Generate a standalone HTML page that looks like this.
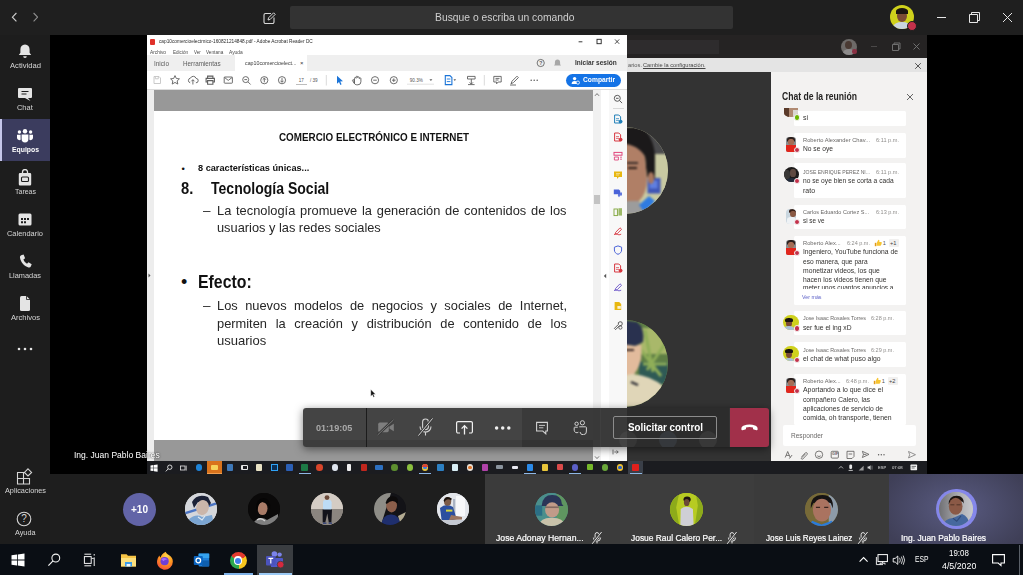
<!DOCTYPE html>
<html lang="es"><head><meta charset="utf-8"><title>Microsoft Teams</title>
<style>
html,body{margin:0;padding:0;background:#000;}
body{width:1023px;height:575px;overflow:hidden;position:relative;font-family:"Liberation Sans",sans-serif;}
#r{position:absolute;left:0;top:0;width:1023px;height:575px;overflow:hidden;background:#000;}
#r div,#r span,#r svg{position:absolute;}
#r span{white-space:nowrap;transform-origin:0 50%;left:0;}
</style></head>
<body><div id="r">
<div style="left:0px;top:0px;width:1023px;height:35px;background:#1f1f1f;"></div>
<svg style="left:8px;top:10px;" width="30" height="14" viewBox="0 0 30 14"><path d="M8.4 3 L4.4 7.2 L8.4 11.4" fill="none" stroke="#cfcfcf" stroke-width="1.1"/><path d="M25.6 3 L29.6 7.2 L25.6 11.4" fill="none" stroke="#8f8f8f" stroke-width="1.1"/></svg>
<svg style="left:262px;top:11px;" width="14" height="14" viewBox="0 0 14 14"><path d="M9 2.5 H3.5 a1.5 1.5 0 0 0 -1.5 1.5 v7 a1.5 1.5 0 0 0 1.5 1.5 h7 a1.5 1.5 0 0 0 1.5 -1.5 V6.5" fill="none" stroke="#d8d8d8" stroke-width="1.1"/><path d="M6 9 L6.6 6.8 L11.6 1.8 L13.2 3.4 L8.2 8.4 Z" fill="none" stroke="#d8d8d8" stroke-width="1"/></svg>
<div style="left:290px;top:5.5px;width:443px;height:23px;background:#333333;border-radius:2px;"></div>
<span id="t1" style="top:10.7px;font-size:10.5px;line-height:12.6px;color:#cfcfcf;font-weight:400;left:435.30px;transform:scaleX(0.9835);">Busque o escriba un comando</span>
<div style="left:890px;top:5px;width:24px;height:24px;border-radius:50%;background:#cfd11c;overflow:hidden;"><div style="left:7px;top:5px;width:10px;height:12px;border-radius:50%;background:#7a4a35;"></div><div style="left:6px;top:3px;width:12px;height:6px;border-radius:50% 50% 0 0;background:#1b1512;"></div><div style="left:3px;top:17px;width:18px;height:10px;border-radius:50% 50% 0 0;background:#c9d4e0;"></div></div>
<div style="left:907px;top:21px;width:8px;height:8px;background:#c4314b;border-radius:50%;border:1px solid #1f1f1f;"></div>
<svg style="left:935px;top:10px;" width="80" height="14" viewBox="0 0 80 14"><path d="M2 7.5 H11" stroke="#e6e6e6" stroke-width="1" fill="none"/><path d="M34.5 4.5 H42.5 V12.5 H34.5 Z M36.5 4.5 V2.5 H44.5 V10.5 H42.5" stroke="#e6e6e6" stroke-width="1" fill="none"/><path d="M68 3 L77 12 M77 3 L68 12" stroke="#e6e6e6" stroke-width="1" fill="none"/></svg>
<div style="left:0px;top:35px;width:50px;height:510px;background:#1d1d1d;"></div>
<div style="left:0px;top:119px;width:50px;height:42px;background:#3b3c5e;"></div>
<div style="left:0px;top:119px;width:2px;height:42px;background:#c5c6ea;"></div>
<svg style="left:17px;top:43px;" width="16" height="17" viewBox="0 0 16 17"><path d="M8 1.5 c-3 0 -4.6 2.2 -4.6 5 v3.2 l-1.6 2.3 h12.4 l-1.6 -2.3 v-3.2 c0 -2.8 -1.6 -5 -4.6 -5z" fill="#e4e4e4"/><path d="M6.2 13.3 h3.6 a1.8 1.8 0 0 1 -3.6 0z" fill="#e4e4e4"/></svg>
<span id="t2" style="top:61.0px;font-size:7.5px;line-height:9.0px;color:#d6d6d6;font-weight:400;left:9.50px;transform:scaleX(1.0185);">Actividad</span>
<svg style="left:17px;top:86px;" width="16" height="16" viewBox="0 0 16 16"><path d="M2 2 h12 a1 1 0 0 1 1 1 v8 a1 1 0 0 1 -1 1 h-3 l2.5 3 l-5.5 -3 h-6 a1 1 0 0 1 -1 -1 v-8 a1 1 0 0 1 1 -1z" fill="#e4e4e4"/><path d="M4.5 5.5 h7 M4.5 8 h5" stroke="#1d1d1d" stroke-width="1"/></svg>
<span id="t3" style="top:102.5px;font-size:7.5px;line-height:9.0px;color:#d6d6d6;font-weight:400;left:17.15px;transform:scaleX(0.9909);">Chat</span>
<svg style="left:16px;top:128px;" width="18" height="16" viewBox="0 0 18 16"><circle cx="9" cy="3.2" r="2.2" fill="#fff"/><circle cx="3.4" cy="4" r="1.7" fill="#fff"/><circle cx="14.6" cy="4" r="1.7" fill="#fff"/><path d="M5.6 6.5 h6.8 v4.5 a3.4 3.4 0 0 1 -6.8 0z" fill="#fff"/><path d="M1 6.8 h3.6 v5 a2.4 2.4 0 0 1 -3.6 -2z" fill="#fff"/><path d="M17 6.8 h-3.6 v5 a2.4 2.4 0 0 0 3.6 -2z" fill="#fff"/></svg>
<span id="t4" style="top:144.8px;font-size:7.5px;line-height:9.0px;color:#fff;font-weight:700;left:11.50px;transform:scaleX(0.9124);">Equipos</span>
<svg style="left:17px;top:169px;" width="16" height="18" viewBox="0 0 16 18"><path d="M5.5 4 v-1 a2.5 2.5 0 0 1 5 0 v1" fill="none" stroke="#e4e4e4" stroke-width="1.3"/><path d="M3 4 h10 a1.2 1.2 0 0 1 1.2 1.2 v10 a1.2 1.2 0 0 1 -1.2 1.2 h-10 a1.2 1.2 0 0 1 -1.2 -1.2 v-10 a1.2 1.2 0 0 1 1.2 -1.2z" fill="#e4e4e4"/><rect x="4.5" y="8" width="7" height="4.5" rx="1" fill="none" stroke="#1d1d1d" stroke-width="1.1"/></svg>
<span id="t5" style="top:186.5px;font-size:7.5px;line-height:9.0px;color:#d6d6d6;font-weight:400;left:14.50px;transform:scaleX(0.9327);">Tareas</span>
<svg style="left:17px;top:212px;" width="16" height="15" viewBox="0 0 16 15"><rect x="1.5" y="1.5" width="13" height="12" rx="1.5" fill="#e4e4e4"/><path d="M4 6 h2 v2 h-2z M7 6 h2 v2 h-2z M10 6 h2 v2 h-2z M4 9.2 h2 v2 h-2z M7 9.2 h2 v2 h-2z" fill="#1d1d1d"/></svg>
<span id="t6" style="top:228.5px;font-size:7.5px;line-height:9.0px;color:#d6d6d6;font-weight:400;left:7.00px;transform:scaleX(0.9922);">Calendario</span>
<svg style="left:18px;top:254px;" width="14" height="15" viewBox="0 0 14 15"><path d="M3.2 1.2 l2.4 -0.6 l1.5 3.6 l-1.7 1.3 c0.7 1.8 1.9 3.2 3.6 4.2 l1.5 -1.5 l3.2 2 l-0.9 2.4 c-0.4 0.9 -1.3 1.2 -2.3 0.9 c-4.6 -1.6 -7.6 -5 -8.5 -9.8 c-0.2 -1.1 0.2 -2.1 1.2 -2.5z" fill="#e4e4e4"/></svg>
<span id="t7" style="top:270.5px;font-size:7.5px;line-height:9.0px;color:#d6d6d6;font-weight:400;left:9.00px;transform:scaleX(0.9837);">Llamadas</span>
<svg style="left:18px;top:295px;" width="14" height="17" viewBox="0 0 14 17"><path d="M2 2.5 a1.5 1.5 0 0 1 1.5 -1.5 h5 l3.5 3.5 v10 a1.5 1.5 0 0 1 -1.5 1.5 h-7 a1.5 1.5 0 0 1 -1.5 -1.5z" fill="#e4e4e4"/><path d="M8.5 1 v3.5 h3.5" fill="none" stroke="#1d1d1d" stroke-width="0.8"/></svg>
<span id="t8" style="top:312.5px;font-size:7.5px;line-height:9.0px;color:#d6d6d6;font-weight:400;left:10.50px;transform:scaleX(1.0081);">Archivos</span>
<svg style="left:16px;top:346px;" width="18" height="6" viewBox="0 0 18 6"><circle cx="3" cy="3" r="1.3" fill="#e4e4e4"/><circle cx="9" cy="3" r="1.3" fill="#e4e4e4"/><circle cx="15" cy="3" r="1.3" fill="#e4e4e4"/></svg>
<svg style="left:16px;top:468px;" width="17" height="17" viewBox="0 0 17 17"><path d="M1.5 4.5 h6 v6 h-6z M1.5 10.5 h6 v5.5 h-6z M7.5 10.5 h6 v5.5 h-6z" fill="none" stroke="#d6d6d6" stroke-width="1.1"/><path d="M12 0.8 l3.6 3.6 l-3.6 3.6 l-3.6 -3.6z" fill="none" stroke="#d6d6d6" stroke-width="1.1"/></svg>
<span id="t9" style="top:486.1px;font-size:7.5px;line-height:9.0px;color:#d6d6d6;font-weight:400;left:4.50px;transform:scaleX(0.9737);">Aplicaciones</span>
<svg style="left:16px;top:511px;" width="16" height="16" viewBox="0 0 16 16"><circle cx="8" cy="8" r="6.8" fill="none" stroke="#d6d6d6" stroke-width="1.1"/></svg>
<span id="t10" style="top:513.2px;font-size:10px;line-height:12.0px;color:#d6d6d6;font-weight:400;left:21.22px;">?</span>
<span id="t11" style="top:528.2px;font-size:7.5px;line-height:9.0px;color:#d6d6d6;font-weight:400;left:14.75px;transform:scaleX(0.9697);">Ayuda</span>
<div style="left:627px;top:35px;width:300px;height:23px;background:#252323;"></div>
<div style="left:627px;top:40px;width:92px;height:13.5px;background:#2e2c2d;"></div>
<div style="left:840.5px;top:38.5px;width:16px;height:16px;border-radius:50%;background:#6d6a68;overflow:hidden;"><div style="left:4.5px;top:2.5px;width:7px;height:8px;border-radius:50%;background:#4a3a33;"></div><div style="left:2px;top:10.5px;width:12px;height:8px;border-radius:50% 50% 0 0;background:#8d8b8b;"></div></div>
<div style="left:852px;top:49px;width:4.5px;height:4.5px;background:#8a3043;border-radius:50%;"></div>
<svg style="left:868px;top:41px;" width="56" height="11" viewBox="0 0 56 11"><path d="M3 5.5 H9" stroke="#4a4848" stroke-width="1"/><path d="M24.5 3.5 H30.5 V9.5 H24.5 Z M26 3.5 V2 H32 V8 H30.5" stroke="#777" stroke-width="0.9" fill="none"/><path d="M45.5 2.5 L51.5 8.5 M51.5 2.5 L45.5 8.5" stroke="#777" stroke-width="0.9"/></svg>
<div style="left:627px;top:58px;width:300px;height:14px;background:#e4e4e4;"></div>
<span id="t12" style="top:62.24px;font-size:5.6px;line-height:6.72px;color:#555;font-weight:400;left:628.00px;transform:scaleX(1.0228);">arios.</span>
<span id="t13" style="top:62.24px;font-size:5.6px;line-height:6.72px;color:#444;font-weight:400;text-decoration:underline;left:642.50px;transform:scaleX(1.0150);">Cambie la configuración.</span>
<svg style="left:914px;top:61.5px;" width="8" height="8" viewBox="0 0 8 8"><path d="M1.2 1.2 L6.8 6.8 M6.8 1.2 L1.2 6.8" stroke="#444" stroke-width="0.9"/></svg>
<div style="left:627px;top:72px;width:144px;height:389px;background:#333333;"></div>
<div style="left:580.5px;top:126.5px;width:87px;height:87px;border-radius:50%;overflow:hidden;background:#c8c9a2;"><svg style="left:0;top:0;filter:blur(0.9px);" width="87" height="87" viewBox="0 0 87 87"><rect width="87" height="27" fill="#4a4a4c"/><rect y="27" width="87" height="60" fill="#c9caa2"/><rect x="66.5" y="51" width="13" height="15.5" fill="#3f55b5"/><rect x="68.5" y="53.5" width="8" height="8" fill="#5f7fe0"/><path d="M40 0 L60 0 Q72 8 74 28 L74 52 L66 50 L64 30 Q58 18 40 16z" fill="#1b191a"/><path d="M40 16 Q58 18 64 30 L66 52 Q66 66 58 74 L40 78z" fill="#b07f66"/><ellipse cx="70" cy="51" rx="3.2" ry="6" fill="#a9775f"/><path d="M47 41 h9" stroke="#2a1d18" stroke-width="2"/><path d="M46 36 h11" stroke="#1b191a" stroke-width="1.6"/><path d="M40 74 L58 74 L66 87 L40 87z" fill="#9c9c9c"/><path d="M58 78 L68 69 L74 74 L64 86z" fill="#2f7be0"/></svg></div>
<div style="left:580.5px;top:320px;width:87px;height:87px;border-radius:50%;overflow:hidden;background:#6d8a4c;"><svg style="left:0;top:0;filter:blur(0.9px);" width="87" height="87" viewBox="0 0 87 87"><rect width="87" height="87" fill="#5f7f45"/><rect x="60" y="8" width="27" height="26" fill="#a9b86a"/><rect x="58" y="42" width="29" height="22" fill="#2f5a55"/><path d="M64 10 L72 52 M84 24 L66 50 M60 30 L80 56 M86 44 L62 44" stroke="#8fae58" stroke-width="3"/><path d="M40 0 L56 2 Q64 8 62 22 L54 26 L40 24z" fill="#29314f"/><path d="M40 24 L54 26 L60 24 Q62 40 56 50 L52 56 L40 56z" fill="#e2bb9c"/><path d="M44 30 h9" stroke="#3a2a28" stroke-width="2"/><path d="M40 56 L52 54 Q70 56 82 66 L84 87 L40 87z" fill="#e0d6b8"/><path d="M50 62 l7 3" stroke="#2b2b33" stroke-width="2.4"/></svg></div>
<div style="left:771px;top:72px;width:156px;height:389px;background:#f3f2f1;"></div>
<span id="t14" style="top:90.5px;font-size:10px;line-height:12.0px;color:#252423;font-weight:700;left:782.00px;transform:scaleX(0.8598);">Chat de la reunión</span>
<svg style="left:906px;top:92.5px;" width="8" height="8" viewBox="0 0 8 8"><path d="M1 1 L7 7 M7 1 L1 7" stroke="#555" stroke-width="0.9"/></svg>
<div style="left:794px;top:111px;width:112px;height:14.8px;background:#ffffff;border-radius:1.5px;"></div>
<div style="left:784px;top:108.0px;width:14px;height:9px;border-radius:0 0 45% 45%;overflow:hidden;background:#b08a72;"><div style="left:0;top:0;width:5px;height:9px;background:#5a3a2a;"></div><div style="left:9px;top:1.6px;width:5px;height:8px;background:#d9d6d2;"></div></div>
<div style="left:793.7px;top:114.10000000000001px;width:4.6px;height:4.6px;border-radius:50%;background:#6bb700;border:0.7px solid #f3f2f1;"></div>
<span id="t15" style="top:113.8px;font-size:7px;line-height:8.4px;color:#33312f;font-weight:400;left:802.70px;transform:scaleX(0.9877);">si</span>
<div style="left:794px;top:132.5px;width:112px;height:25.0px;background:#ffffff;border-radius:1.5px;"></div>
<div style="left:786.2px;top:136.5px;width:9.6px;height:15.2px;border-radius:3px 3px 2px 2px;overflow:hidden;background:#8b8f92;"><div style="left:1.2px;top:0;width:7.2px;height:5px;border-radius:50% 50% 30% 30%;background:#2a1f1d;"></div><div style="left:2.2px;top:2.6px;width:5.2px;height:6px;border-radius:45%;background:#a56d55;"></div><div style="left:0;top:8.4px;width:9.6px;height:7px;background:#e2261c;"></div></div>
<div style="left:793.7px;top:146.79999999999998px;width:4.6px;height:4.6px;border-radius:50%;background:#c4314b;border:0.7px solid #f3f2f1;"></div>
<span id="t16" style="top:136.88px;font-size:5.7px;line-height:6.84px;color:#6a6867;font-weight:400;left:802.70px;transform:scaleX(1.0106);">Roberto Alexander Chav...</span>
<span id="t17" style="top:136.88px;font-size:5.7px;line-height:6.84px;color:#8f8d8b;font-weight:400;left:875.50px;transform:scaleX(0.9873);">6:11 p.m.</span>
<span id="t18" style="top:145.2px;font-size:7px;line-height:8.4px;color:#33312f;font-weight:400;left:802.70px;transform:scaleX(0.9514);">No se oye</span>
<div style="left:794px;top:163.3px;width:112px;height:34.3px;background:#ffffff;border-radius:1.5px;"></div>
<div style="left:783.5px;top:167.4px;width:15px;height:15px;border-radius:50%;overflow:hidden;background:#1d1b1b;"><div style="left:6px;top:2px;width:6px;height:7.5px;border-radius:45%;background:#5f4a42;"></div><div style="left:0;top:3px;width:6px;height:9px;background:#3a3837;border-radius:40%;"></div><div style="left:2px;top:10.5px;width:11px;height:6px;border-radius:50% 50% 0 0;background:#232c3c;"></div></div>
<div style="left:793.7px;top:177.6px;width:4.6px;height:4.6px;border-radius:50%;background:#c4314b;border:0.7px solid #f3f2f1;"></div>
<span id="t19" style="top:168.98px;font-size:5.7px;line-height:6.84px;color:#6a6867;font-weight:400;left:802.70px;transform:scaleX(0.8945);">JOSE ENRIQUE PEREZ NI...</span>
<span id="t20" style="top:168.98px;font-size:5.7px;line-height:6.84px;color:#8f8d8b;font-weight:400;left:875.50px;transform:scaleX(0.9873);">6:11 p.m.</span>
<span id="t21" style="top:177.3px;font-size:7px;line-height:8.4px;color:#33312f;font-weight:400;left:802.70px;transform:scaleX(0.9502);">no se oye bien se corta a cada</span>
<span id="t22" style="top:186.5px;font-size:7px;line-height:8.4px;color:#33312f;font-weight:400;left:802.70px;transform:scaleX(0.9948);">rato</span>
<div style="left:794px;top:204.5px;width:112px;height:24.1px;background:#ffffff;border-radius:1.5px;"></div>
<div style="left:786px;top:208.5px;width:10.4px;height:15.2px;border-radius:4px;overflow:hidden;background:#c9d6df;"><div style="left:3.4px;top:0.4px;width:7px;height:4.4px;background:#3a221a;border-radius:50% 50% 20% 20%;"></div><div style="left:4px;top:2.4px;width:5.6px;height:6.4px;border-radius:45%;background:#8a5a44;"></div><div style="left:0.8px;top:8.4px;width:9.6px;height:7px;background:#eef2f5;border-radius:40% 40% 0 0;"></div></div>
<div style="left:793.7px;top:218.79999999999998px;width:4.6px;height:4.6px;border-radius:50%;background:#c4314b;border:0.7px solid #f3f2f1;"></div>
<span id="t23" style="top:208.88px;font-size:5.7px;line-height:6.84px;color:#6a6867;font-weight:400;left:802.70px;transform:scaleX(0.9710);">Carlos Eduardo Cortez S...</span>
<span id="t24" style="top:208.88px;font-size:5.7px;line-height:6.84px;color:#8f8d8b;font-weight:400;left:875.50px;transform:scaleX(0.9697);">6:13 p.m.</span>
<span id="t25" style="top:217.2px;font-size:7px;line-height:8.4px;color:#33312f;font-weight:400;left:802.70px;transform:scaleX(0.9059);">si se ve</span>
<div style="left:794px;top:235.6px;width:112px;height:69.2px;background:#ffffff;border-radius:1.5px;"></div>
<div style="left:786.2px;top:239.6px;width:9.6px;height:15.2px;border-radius:3px 3px 2px 2px;overflow:hidden;background:#8b8f92;"><div style="left:1.2px;top:0;width:7.2px;height:5px;border-radius:50% 50% 30% 30%;background:#2a1f1d;"></div><div style="left:2.2px;top:2.6px;width:5.2px;height:6px;border-radius:45%;background:#a56d55;"></div><div style="left:0;top:8.4px;width:9.6px;height:7px;background:#e2261c;"></div></div>
<div style="left:793.7px;top:249.89999999999998px;width:4.6px;height:4.6px;border-radius:50%;background:#c4314b;border:0.7px solid #f3f2f1;"></div>
<span id="t26" style="top:239.98px;font-size:5.7px;line-height:6.84px;color:#6a6867;font-weight:400;left:802.70px;transform:scaleX(1.0077);">Roberto Alex...</span>
<span id="t27" style="top:239.98px;font-size:5.7px;line-height:6.84px;color:#8f8d8b;font-weight:400;left:847.00px;transform:scaleX(0.9697);">6:24 p.m.</span>
<svg style="left:873.5px;top:239.20000000000002px;" width="8" height="8" viewBox="0 0 8 8"><path d="M0.8 3.8 h1.6 v3.4 h-1.6z" fill="#e09a1a"/><path d="M2.8 3.8 l1.6 -3 c1 0 1.2 0.8 0.9 2.2 h1.7 c0.7 0 0.9 0.6 0.6 1 c0.3 0.4 0.2 0.8 -0.2 1 c0.2 0.4 0 0.8 -0.4 0.9 c0.1 0.5 -0.2 0.8 -0.8 0.8 h-3.4z" fill="#f7c531"/></svg>
<span id="t28" style="top:239.98px;font-size:5.7px;line-height:6.84px;color:#555;font-weight:400;left:882.80px;">1</span>
<div style="left:889.0px;top:239.4px;width:10px;height:8px;background:#f1f0ef;border-radius:1px;"></div>
<span id="t29" style="top:239.98px;font-size:5.7px;line-height:6.84px;color:#444;font-weight:400;left:890.00px;">+1</span>
<span id="t30" style="top:248.3px;font-size:7px;line-height:8.4px;color:#33312f;font-weight:400;left:802.70px;transform:scaleX(0.9634);">Ingeniero, YouTube funciona de</span>
<span id="t31" style="top:257.5px;font-size:7px;line-height:8.4px;color:#33312f;font-weight:400;left:802.70px;transform:scaleX(0.9431);">eso manera, que para</span>
<span id="t32" style="top:266.7px;font-size:7px;line-height:8.4px;color:#33312f;font-weight:400;left:802.70px;transform:scaleX(0.9661);">monetizar videos, los que</span>
<span id="t33" style="top:275.9px;font-size:7px;line-height:8.4px;color:#33312f;font-weight:400;left:802.70px;transform:scaleX(0.9620);">hacen los videos tienen que</span>
<div style="left:802px;top:284.5px;width:100px;height:4.4px;overflow:hidden;"><span id="clip1" style="left:0.7px;top:-0.2px;font-size:7px;line-height:8.4px;color:#2b2a29;transform:scaleX(0.93);">meter unos cuantos anuncios a</span></div>
<span id="t34" style="top:293.98px;font-size:5.7px;line-height:6.84px;color:#5b5fc7;font-weight:400;left:802.30px;transform:scaleX(0.9341);">Ver más</span>
<div style="left:794px;top:310.8px;width:112px;height:24.2px;background:#ffffff;border-radius:1.5px;"></div>
<div style="left:783.4px;top:314.8px;width:15.2px;height:15.2px;border-radius:50%;overflow:hidden;background:#cfd11c;"><div style="left:2.4px;top:4.4px;width:6.4px;height:7.6px;border-radius:45%;background:#7a4a36;"></div><div style="left:1.8px;top:3.2px;width:7.4px;height:4px;border-radius:50% 50% 20% 20%;background:#191311;"></div><div style="left:0.6px;top:11.6px;width:10px;height:5px;border-radius:50% 50% 0 0;background:#a9c0d8;"></div></div>
<div style="left:793.7px;top:325.1px;width:4.6px;height:4.6px;border-radius:50%;background:#c4314b;border:0.7px solid #f3f2f1;"></div>
<span id="t35" style="top:315.18px;font-size:5.7px;line-height:6.84px;color:#6a6867;font-weight:400;left:802.70px;transform:scaleX(0.9460);">Jose Isaac Rosales Torres</span>
<span id="t36" style="top:315.18px;font-size:5.7px;line-height:6.84px;color:#8f8d8b;font-weight:400;left:871.00px;transform:scaleX(0.9697);">6:28 p.m.</span>
<span id="t37" style="top:323.5px;font-size:7px;line-height:8.4px;color:#33312f;font-weight:400;left:802.70px;transform:scaleX(0.9586);">ser fue el ing xD</span>
<div style="left:794px;top:342.2px;width:112px;height:24.4px;background:#ffffff;border-radius:1.5px;"></div>
<div style="left:783.4px;top:346.2px;width:15.2px;height:15.2px;border-radius:50%;overflow:hidden;background:#cfd11c;"><div style="left:2.4px;top:4.4px;width:6.4px;height:7.6px;border-radius:45%;background:#7a4a36;"></div><div style="left:1.8px;top:3.2px;width:7.4px;height:4px;border-radius:50% 50% 20% 20%;background:#191311;"></div><div style="left:0.6px;top:11.6px;width:10px;height:5px;border-radius:50% 50% 0 0;background:#a9c0d8;"></div></div>
<div style="left:793.7px;top:356.5px;width:4.6px;height:4.6px;border-radius:50%;background:#c4314b;border:0.7px solid #f3f2f1;"></div>
<span id="t38" style="top:346.58px;font-size:5.7px;line-height:6.84px;color:#6a6867;font-weight:400;left:802.70px;transform:scaleX(0.9460);">Jose Isaac Rosales Torres</span>
<span id="t39" style="top:346.58px;font-size:5.7px;line-height:6.84px;color:#8f8d8b;font-weight:400;left:871.00px;transform:scaleX(0.9697);">6:29 p.m.</span>
<span id="t40" style="top:354.9px;font-size:7px;line-height:8.4px;color:#33312f;font-weight:400;left:802.70px;transform:scaleX(0.9762);">el chat de what puso algo</span>
<div style="left:794px;top:373.6px;width:112px;height:51.8px;background:#ffffff;border-radius:1.5px;"></div>
<div style="left:786.2px;top:377.6px;width:9.6px;height:15.2px;border-radius:3px 3px 2px 2px;overflow:hidden;background:#8b8f92;"><div style="left:1.2px;top:0;width:7.2px;height:5px;border-radius:50% 50% 30% 30%;background:#2a1f1d;"></div><div style="left:2.2px;top:2.6px;width:5.2px;height:6px;border-radius:45%;background:#a56d55;"></div><div style="left:0;top:8.4px;width:9.6px;height:7px;background:#e2261c;"></div></div>
<div style="left:793.7px;top:387.90000000000003px;width:4.6px;height:4.6px;border-radius:50%;background:#c4314b;border:0.7px solid #f3f2f1;"></div>
<span id="t41" style="top:377.98px;font-size:5.7px;line-height:6.84px;color:#6a6867;font-weight:400;left:802.70px;transform:scaleX(1.0077);">Roberto Alex...</span>
<span id="t42" style="top:377.98px;font-size:5.7px;line-height:6.84px;color:#8f8d8b;font-weight:400;left:846.00px;transform:scaleX(0.9697);">6:48 p.m.</span>
<svg style="left:872.5px;top:377.20000000000005px;" width="8" height="8" viewBox="0 0 8 8"><path d="M0.8 3.8 h1.6 v3.4 h-1.6z" fill="#e09a1a"/><path d="M2.8 3.8 l1.6 -3 c1 0 1.2 0.8 0.9 2.2 h1.7 c0.7 0 0.9 0.6 0.6 1 c0.3 0.4 0.2 0.8 -0.2 1 c0.2 0.4 0 0.8 -0.4 0.9 c0.1 0.5 -0.2 0.8 -0.8 0.8 h-3.4z" fill="#f7c531"/></svg>
<span id="t43" style="top:377.98px;font-size:5.7px;line-height:6.84px;color:#555;font-weight:400;left:881.80px;">1</span>
<div style="left:888.0px;top:377.40000000000003px;width:10px;height:8px;background:#f1f0ef;border-radius:1px;"></div>
<span id="t44" style="top:377.98px;font-size:5.7px;line-height:6.84px;color:#444;font-weight:400;left:889.00px;">+2</span>
<span id="t45" style="top:386.3px;font-size:7px;line-height:8.4px;color:#33312f;font-weight:400;left:802.70px;transform:scaleX(0.9835);">Aportando a lo que dice el</span>
<span id="t46" style="top:395.5px;font-size:7px;line-height:8.4px;color:#33312f;font-weight:400;left:802.70px;transform:scaleX(0.9512);">compañero Calero, las</span>
<span id="t47" style="top:404.7px;font-size:7px;line-height:8.4px;color:#33312f;font-weight:400;left:802.70px;transform:scaleX(0.9561);">aplicaciones de servicio de</span>
<span id="t48" style="top:413.9px;font-size:7px;line-height:8.4px;color:#33312f;font-weight:400;left:802.70px;transform:scaleX(0.9771);">comida, oh transporte, tienen</span>
<div style="left:783px;top:425.4px;width:133.4px;height:20.3px;background:#ffffff;border-radius:2px;"></div>
<span id="t49" style="top:432.34px;font-size:6.6px;line-height:7.92px;color:#6a6867;font-weight:400;left:791.00px;transform:scaleX(0.9918);">Responder</span>
<svg style="left:783px;top:448.5px;" width="136" height="11" viewBox="0 0 136 11"><g fill="none" stroke="#5a5958" stroke-width="0.8"><path d="M2.2 8.5 L4.7 2.5 L7.2 8.5 M3.2 6.4 H6.2 M6.3 9.6 l2.8 -3.6"/><path d="M18.6 7.8 l3.6 -3.8 a1.2 1.2 0 0 1 1.8 1.6 l-4.2 4.4 a0.8 0.8 0 0 1 -1.2 -1.1 l3.7 -3.9"/><circle cx="36" cy="5.7" r="3.7"/><path d="M34.3 6.8 q1.7 1.6 3.4 0"/><rect x="48.2" y="2.3" width="7.2" height="6.8" rx="1"/><path d="M64 2.3 h7 v5.2 l-2 2 h-5 z M65.6 5 h3.6"/><path d="M79.4 2.3 l6.6 3.1 l-6.6 3.1 l1 -3.1 z M80.4 5.4 h3"/><path d="M125.5 2.5 l7 3.2 l-7 3.2 l1.2 -3.2 z" stroke="#7a7978"/></g><circle cx="95.6" cy="5.8" r="0.7" fill="#5a5958"/><circle cx="98.3" cy="5.8" r="0.7" fill="#5a5958"/><circle cx="101" cy="5.8" r="0.7" fill="#5a5958"/></svg>
<span id="t50" style="top:452.14px;font-size:3.6px;line-height:4.32px;color:#5a5958;font-weight:700;left:832.10px;">GIF</span>
<div style="left:147px;top:35px;width:480px;height:426px;background:#ffffff;"></div>
<div style="left:149.5px;top:38.5px;width:5px;height:6px;background:#e0312a;border-radius:1px;"></div>
<span id="t51" style="top:38.4px;font-size:5.5px;line-height:6.6px;color:#2a2a2a;font-weight:400;left:158.75px;transform:scaleX(0.8625);">cap10comercioelectrnico-160821214848.pdf - Adobe Acrobat Reader DC</span>
<svg style="left:575px;top:37px;" width="48" height="9" viewBox="0 0 48 9"><path d="M3.6 4.8 H7.4" stroke="#222" stroke-width="0.9"/><rect x="22" y="2.3" width="4.2" height="4.4" fill="none" stroke="#222" stroke-width="0.9"/><path d="M40 2.4 L44.2 6.8 M44.2 2.4 L40 6.8" stroke="#222" stroke-width="0.8"/></svg>
<span id="t52" style="top:48.7px;font-size:5px;line-height:6.0px;color:#4a4a4a;font-weight:400;left:150.00px;transform:scaleX(0.9588);">Archivo</span>
<span id="t53" style="top:48.7px;font-size:5px;line-height:6.0px;color:#4a4a4a;font-weight:400;left:172.50px;transform:scaleX(0.9143);">Edición</span>
<span id="t54" style="top:48.7px;font-size:5px;line-height:6.0px;color:#4a4a4a;font-weight:400;left:193.75px;transform:scaleX(0.8981);">Ver</span>
<span id="t55" style="top:48.7px;font-size:5px;line-height:6.0px;color:#4a4a4a;font-weight:400;left:205.75px;transform:scaleX(0.9396);">Ventana</span>
<span id="t56" style="top:48.7px;font-size:5px;line-height:6.0px;color:#4a4a4a;font-weight:400;left:228.75px;transform:scaleX(0.9756);">Ayuda</span>
<div style="left:147px;top:55px;width:480px;height:15.5px;background:#efefef;"></div>
<div style="left:234.5px;top:55px;width:72.5px;height:15.5px;background:#ffffff;"></div>
<span id="t57" style="top:59.94px;font-size:6.6px;line-height:7.92px;color:#5c5c5c;font-weight:400;left:153.75px;transform:scaleX(0.9736);">Inicio</span>
<span id="t58" style="top:59.94px;font-size:6.6px;line-height:7.92px;color:#5c5c5c;font-weight:400;left:183.00px;transform:scaleX(0.9538);">Herramientas</span>
<span id="t59" style="top:60.1px;font-size:5.5px;line-height:6.6px;color:#3a3a3a;font-weight:400;left:244.50px;transform:scaleX(0.9626);">cap10comercioelect...</span>
<span id="t60" style="top:59.6px;font-size:6px;line-height:7.2px;color:#333;font-weight:400;left:300.00px;">×</span>
<svg style="left:534px;top:57px;" width="30" height="12" viewBox="0 0 30 12"><circle cx="6.7" cy="6" r="3.6" fill="none" stroke="#555" stroke-width="0.8"/><path d="M23.5 2.6 c-1.8 0 -2.6 1.3 -2.6 2.8 v1.8 l-0.9 1.2 h7 l-0.9 -1.2 v-1.8 c0 -1.5 -0.8 -2.8 -2.6 -2.8z" fill="#a7a7a7"/></svg>
<span id="t61" style="top:60.2px;font-size:5px;line-height:6.0px;color:#555;font-weight:700;left:539.17px;">?</span>
<span id="t62" style="top:59.36px;font-size:6.4px;line-height:7.68px;color:#333;font-weight:700;left:574.50px;transform:scaleX(1.0218);">Iniciar sesión</span>
<div style="left:147px;top:70.5px;width:480px;height:19px;background:#ffffff;"></div>
<div style="left:147px;top:89px;width:480px;height:0.6px;background:#dcdcdc;"></div>
<svg style="left:150px;top:73px;" width="400" height="14" viewBox="0 0 400 14"><g fill="none" stroke="#5f5f5f" stroke-width="0.9"><path d="M4 3.5 h5 l1.5 1.5 v5.5 h-6.5z M5.3 3.5 v2.3 h3 v-2.3" stroke="#c4c4c4"/><path d="M25 2.6 l1.35 2.9 l3.1 0.35 l-2.3 2.1 l0.65 3.1 l-2.8 -1.6 l-2.8 1.6 l0.65 -3.1 l-2.3 -2.1 l3.1 -0.35z"/><path d="M40.2 9.8 a2.4 2.4 0 0 1 0.3 -4.7 a3 3 0 0 1 5.6 0.3 a2.2 2.2 0 0 1 -0.2 4.4 M42.9 11.5 v-4.6 M41.3 8.3 l1.6 -1.6 l1.6 1.6"/><path d="M57.6 5.4 v-2.3 h5.3 v2.3 M57.6 9 h-1.5 v-3.6 h8.3 v3.6 h-1.5 M57.6 7.6 h5.3 v3.6 h-5.3z" stroke-width="1.1"/><rect x="74.2" y="4" width="8.2" height="6.2" rx="0.6"/><path d="M74.4 4.4 l3.9 3 l3.9 -3"/><circle cx="95.7" cy="6.6" r="3"/><path d="M98 8.9 l2.6 2.6 M94.3 6.6 h2.8"/><circle cx="114.3" cy="7.2" r="3.6"/><path d="M114.3 9.3 v-4 M112.7 6.7 l1.6 -1.6 l1.6 1.6"/><circle cx="132" cy="7.2" r="3.6"/><path d="M132 5.1 v4 M130.4 7.7 l1.6 1.6 l1.6 -1.6"/><path d="M176.3 2 v10.5" stroke="#d6d6d6"/><path d="M204.5 10.5 v-5.2 a0.8 0.8 0 0 1 1.6 0 v-1.3 a0.8 0.8 0 0 1 1.6 0 v0.6 a0.8 0.8 0 0 1 1.6 0 v1 a0.8 0.8 0 0 1 1.6 0 v3.2 a3 3 0 0 1 -3 3 h-1.2 a3 3 0 0 1 -2.6 -1.6 l-1.6 -2.6 a0.8 0.8 0 0 1 1.3 -0.8z"/><circle cx="225" cy="7.2" r="3.6"/><path d="M223.2 7.2 h3.6"/><circle cx="243.8" cy="7.2" r="3.6"/><path d="M242 7.2 h3.6 M243.8 5.4 v3.6"/><path d="M257 11.2 h27" stroke="#cfcfcf" stroke-width="0.6"/><path d="M295.3 2.6 h4.6 l2 2 v7 h-6.6z" stroke="#1b74d8" stroke-width="1.1"/><path d="M296.8 6 h3.6 M296.8 8.6 h3.6" stroke="#1b74d8"/><path d="M317.5 3.4 h7.6 v2.6 h-7.6z M321.3 6 v5 M319.6 9.4 l1.7 1.7 l1.7 -1.7 M318 11.6 h6.6"/><path d="M334.3 2 v10.5" stroke="#d6d6d6"/><path d="M343.8 3.4 h7.4 v5.6 h-3 l-1.6 1.8 v-1.8 h-2.8z M345.5 5.4 h4 M345.5 7 h3"/><path d="M361 10.8 l1 -2.6 l5 -5 l1.4 1.4 l-5 5z M360 12 h6" /></g><path d="M187 2.8 l0 8 l2 -1.9 l1.4 3 l1.2 -0.6 l-1.4 -2.9 l2.8 -0.2z" fill="#1b74d8"/><path d="M279.4 6.2 h3 l-1.5 1.8z M303.5 6.3 h2.6 l-1.3 1.6z" fill="#5f5f5f"/><circle cx="381.2" cy="7.2" r="0.8" fill="#5f5f5f"/><circle cx="384.2" cy="7.2" r="0.8" fill="#5f5f5f"/><circle cx="387.2" cy="7.2" r="0.8" fill="#5f5f5f"/></svg>
<div style="left:296px;top:84.4px;width:10.5px;height:0.5px;background:#bdbdbd;"></div>
<span id="t63" style="top:77.54px;font-size:4.6px;line-height:5.52px;color:#555;font-weight:400;left:298.69px;">17</span>
<span id="t64" style="top:77.54px;font-size:4.6px;line-height:5.52px;color:#555;font-weight:400;left:309.91px;">/ 39</span>
<span id="t65" style="top:77.54px;font-size:4.6px;line-height:5.52px;color:#555;font-weight:400;left:409.75px;">90.3%</span>
<div style="left:566px;top:73.8px;width:54.5px;height:13px;background:#1473e6;border-radius:6.5px;"></div>
<svg style="left:570.5px;top:76px;" width="9" height="9" viewBox="0 0 9 9"><circle cx="3.6" cy="2.6" r="1.7" fill="#fff"/><path d="M0.6 8 a3 3 0 0 1 6 0z" fill="#fff"/><circle cx="6.9" cy="6.6" r="1.6" fill="#1473e6" stroke="#fff" stroke-width="0.8"/></svg>
<span id="t66" style="top:76.34px;font-size:6.6px;line-height:7.92px;color:#fff;font-weight:700;left:583.30px;transform:scaleX(1.0154);">Compartir</span>
<div style="left:147px;top:89.6px;width:7.2px;height:371.4px;background:#ededed;"></div>
<div style="left:154.2px;top:90px;width:438.8px;height:20.6px;background:#989898;"></div>
<div style="left:154.2px;top:440.3px;width:438.8px;height:20.7px;background:#989898;"></div>
<svg style="left:148.3px;top:272.5px;" width="3" height="5" viewBox="0 0 3 5"><path d="M0.5 0.6 L2.5 2.5 L0.5 4.4z" fill="#555"/></svg>
<div style="left:593px;top:89.6px;width:8.3px;height:371.4px;background:#f1f1f1;"></div>
<div style="left:594px;top:194.5px;width:6.3px;height:9.5px;background:#c3c3c3;"></div>
<svg style="left:594.4px;top:91.5px;" width="6" height="5" viewBox="0 0 6 5"><path d="M1 3.8 L3 1.6 L5 3.8" fill="none" stroke="#555" stroke-width="0.8"/></svg>
<svg style="left:594.4px;top:454.5px;" width="6" height="5" viewBox="0 0 6 5"><path d="M1 1.4 L3 3.6 L5 1.4" fill="none" stroke="#555" stroke-width="0.8"/></svg>
<svg style="left:602.5px;top:272.5px;" width="4" height="6" viewBox="0 0 4 6"><path d="M3.2 0.8 L0.8 3 L3.2 5.2z" fill="#555"/></svg>
<div style="left:609px;top:89.6px;width:18px;height:371.4px;background:#f8f8f8;"></div>
<div style="left:612.5px;top:108px;width:11px;height:0.5px;background:#d8d8d8;"></div>
<svg style="left:612.5px;top:94.3px;" width="10" height="10" viewBox="0 0 10 10"><circle cx="4.3" cy="4.3" r="3" fill="none" stroke="#4b4b4b" stroke-width="0.9"/><path d="M6.5 6.5 l2.6 2.6 M3 4.3 h2.6" stroke="#4b4b4b" stroke-width="0.9"/></svg>
<svg style="left:612.5px;top:113.5px;" width="10" height="10" viewBox="0 0 10 10"><path d="M1.6 1 h4.2 l1.8 1.8 v6.2 h-6z" fill="none" stroke="#1f7fb8" stroke-width="1"/><path d="M3 4.6 h3 M3 6.4 h3" stroke="#1f7fb8" stroke-width="0.7"/><circle cx="7.6" cy="7.6" r="1.9" fill="#1f7fb8"/></svg>
<svg style="left:612.5px;top:132.3px;" width="10" height="10" viewBox="0 0 10 10"><path d="M1.6 1 h4.2 l1.8 1.8 v6.2 h-6z" fill="none" stroke="#d7373f" stroke-width="1"/><path d="M3 4.6 h3 M3 6.4 h3" stroke="#d7373f" stroke-width="0.7"/><circle cx="7.6" cy="7.6" r="1.9" fill="#d7373f"/></svg>
<svg style="left:612.5px;top:150.7px;" width="10" height="10" viewBox="0 0 10 10"><rect x="1" y="1.4" width="8" height="2.8" fill="none" stroke="#e0457b" stroke-width="1"/><path d="M1.4 6 h4 v3 h-4z" fill="none" stroke="#e0457b" stroke-width="0.9"/><path d="M7 6.2 h2 M7 8.2 h2" stroke="#e0457b" stroke-width="0.8"/></svg>
<svg style="left:612.5px;top:169.5px;" width="10" height="10" viewBox="0 0 10 10"><path d="M1 1.6 h8 v5.4 h-3.2 l-1.8 2 v-2 h-3z" fill="#e8b711"/><path d="M3 3.6 h4 M3 5 h3" stroke="#fff" stroke-width="0.5"/></svg>
<svg style="left:612.5px;top:188.0px;" width="10" height="10" viewBox="0 0 10 10"><path d="M0.8 1.4 h5 l1.4 1.4 v3.4 h-6.4z" fill="#4a63d8"/><path d="M5 4.4 h4 v3 h-1.6 l-1.4 1.8 l-1.4 -1.8 h0.4z" fill="#4a63d8" opacity="0.85"/></svg>
<svg style="left:612.5px;top:206.7px;" width="10" height="10" viewBox="0 0 10 10"><rect x="1" y="2" width="3.4" height="6.6" fill="none" stroke="#7fa53a" stroke-width="0.9"/><rect x="5.4" y="1.2" width="3.6" height="7.4" fill="#7fa53a" opacity="0.75"/></svg>
<svg style="left:612.5px;top:226.0px;" width="10" height="10" viewBox="0 0 10 10"><path d="M1 8.6 q2 -1.2 3.4 -0.2 t3.8 -0.2" fill="none" stroke="#d7373f" stroke-width="0.9"/><path d="M2.6 6.4 l4.4 -4.6 l1.6 1.5 l-4.4 4.4 l-2 0.4z" fill="none" stroke="#d7373f" stroke-width="0.9"/></svg>
<svg style="left:612.5px;top:244.5px;" width="10" height="10" viewBox="0 0 10 10"><path d="M5 0.9 l3.6 1.3 v2.8 c0 2.2 -1.5 3.6 -3.6 4.3 c-2.1 -0.7 -3.6 -2.1 -3.6 -4.3 v-2.8z" fill="none" stroke="#4a63d8" stroke-width="1"/></svg>
<svg style="left:612.5px;top:262.7px;" width="10" height="10" viewBox="0 0 10 10"><path d="M1.6 1 h4.2 l1.8 1.8 v6.2 h-6z" fill="none" stroke="#d7373f" stroke-width="1"/><path d="M3 4.6 h3 M3 6.4 h3" stroke="#d7373f" stroke-width="0.7"/><circle cx="7.6" cy="7.6" r="1.9" fill="#d7373f"/></svg>
<svg style="left:612.5px;top:281.8px;" width="10" height="10" viewBox="0 0 10 10"><path d="M1 8.6 q2 -1.2 3.4 -0.2 t3.8 -0.2" fill="none" stroke="#6a52c8" stroke-width="0.9"/><path d="M2.6 6.4 l4.4 -4.6 l1.6 1.5 l-4.4 4.4 l-2 0.4z" fill="none" stroke="#6a52c8" stroke-width="0.9"/></svg>
<svg style="left:612.5px;top:300.5px;" width="10" height="10" viewBox="0 0 10 10"><path d="M1.6 1 h4.6 l2 2 v6 h-6.6z" fill="#e8b711"/><rect x="4.4" y="5" width="3.4" height="2.8" fill="#fff" opacity="0.8"/></svg>
<svg style="left:612.5px;top:320.0px;" width="10" height="10" viewBox="0 0 10 10"><path d="M1.4 8.4 l4 -4 a2 2 0 1 1 1.2 1.2 l-4 4z" fill="none" stroke="#4b4b4b" stroke-width="0.9"/><circle cx="7.4" cy="7.6" r="1.6" fill="none" stroke="#4b4b4b" stroke-width="0.8"/></svg>
<svg style="left:611.5px;top:448.5px;" width="7" height="6" viewBox="0 0 7 6"><path d="M1 0.6 v4.8 M2.4 3 h3.8 M4.6 1.4 l1.6 1.6 l-1.6 1.6" fill="none" stroke="#555" stroke-width="0.8"/></svg>
<span id="t67" style="top:130.76px;font-size:10.5px;line-height:12.6px;color:#111111;font-weight:700;left:279.00px;transform:scaleX(0.9386);">COMERCIO ELECTRÓNICO E INTERNET</span>
<span id="t68" style="top:163.01px;font-size:9.5px;line-height:11.4px;color:#111111;font-weight:400;left:181.40px;">•</span>
<span id="t69" style="top:162.17px;font-size:9.8px;line-height:11.76px;color:#111111;font-weight:700;left:197.50px;transform:scaleX(0.9370);">8 características únicas...</span>
<span id="t70" style="top:179.59px;font-size:15.7px;line-height:18.84px;color:#111111;font-weight:700;left:181.00px;transform:scaleX(0.9394);">8.</span>
<span id="t71" style="top:179.59px;font-size:15.7px;line-height:18.84px;color:#111111;font-weight:700;left:210.50px;transform:scaleX(0.8944);">Tecnología Social</span>
<span id="t72" style="top:203.33px;font-size:13.6px;line-height:16.32px;color:#262626;font-weight:400;left:203.00px;transform:scaleX(0.9917);">–</span>
<span id="t73" style="top:203.33px;font-size:13.6px;line-height:16.32px;color:#262626;font-weight:400;left:217.00px;word-spacing:1.263px;transform:scaleX(0.9450);">La tecnología promueve la generación de contenidos de los</span>
<span id="t74" style="top:220.33px;font-size:13.6px;line-height:16.32px;color:#262626;font-weight:400;left:217.00px;transform:scaleX(0.9423);">usuarios y las redes sociales</span>
<span id="t75" style="top:272.26px;font-size:18px;line-height:21.6px;color:#111111;font-weight:400;left:181.00px;">•</span>
<span id="t76" style="top:271.64px;font-size:17.5px;line-height:21.0px;color:#111111;font-weight:700;left:198.00px;transform:scaleX(0.9062);">Efecto:</span>
<span id="t77" style="top:297.83px;font-size:13.6px;line-height:16.32px;color:#262626;font-weight:400;left:203.00px;transform:scaleX(0.9917);">–</span>
<span id="t78" style="top:297.83px;font-size:13.6px;line-height:16.32px;color:#262626;font-weight:400;left:217.00px;word-spacing:4.072px;transform:scaleX(0.9450);">Los nuevos modelos de negocios y sociales de Internet,</span>
<span id="t79" style="top:315.83px;font-size:13.6px;line-height:16.32px;color:#262626;font-weight:400;left:217.00px;word-spacing:5.396px;transform:scaleX(0.9450);">permiten la creación y distribución de contenido de los</span>
<span id="t80" style="top:333.33px;font-size:13.6px;line-height:16.32px;color:#262626;font-weight:400;left:217.00px;transform:scaleX(0.9583);">usuarios</span>
<svg style="left:370px;top:388.5px;" width="6" height="9" viewBox="0 0 6 9"><path d="M0.8 0.6 v6.6 l1.6 -1.5 l1.1 2.6 l1 -0.5 l-1.1 -2.5 h2.1z" fill="#111" stroke="#fff" stroke-width="0.3"/></svg>
<div style="left:147px;top:461px;width:780px;height:12.8px;background:#1b1c20;"></div>
<div style="left:206.5px;top:461px;width:15.5px;height:13px;background:#d9731c;"></div>
<div style="left:206.5px;top:473px;width:15.5px;height:1px;background:#f0a052;"></div>
<div style="left:628px;top:461px;width:15px;height:13px;background:#3a3f48;"></div>
<svg style="left:150px;top:463.5px;" width="8" height="8" viewBox="0 0 8 8"><path d="M0.5 1.4 L3.5 1 V3.8 H0.5z M4 0.9 L7.6 0.4 V3.8 H4z M0.5 4.3 H3.5 V7.1 L0.5 6.7z M4 4.3 H7.6 V7.7 L4 7.2z" fill="#fff"/></svg>
<svg style="left:164.5px;top:463.5px;" width="8" height="8" viewBox="0 0 8 8"><circle cx="4.8" cy="3.2" r="2.2" fill="none" stroke="#e8e8e8" stroke-width="0.9"/><path d="M3.2 4.8 L0.8 7.4" stroke="#e8e8e8" stroke-width="0.9"/></svg>
<svg style="left:179.4px;top:463.5px;" width="8" height="8" viewBox="0 0 8 8"><rect x="1.4" y="2" width="4.6" height="4" fill="none" stroke="#e8e8e8" stroke-width="0.8"/><path d="M7.2 1.6 v5" stroke="#e8e8e8" stroke-width="0.8"/></svg>
<div style="left:195.75px;top:464.05px;width:6.5px;height:6.5px;background:#1e84d8;border-radius:50%;"></div>
<div style="left:211.0px;top:464.55px;width:7px;height:5.5px;background:#f7d35a;border-radius:1px;"></div>
<div style="left:226.5px;top:464.05px;width:6px;height:6.5px;background:#3e78b8;border-radius:1px;"></div>
<div style="left:241.45px;top:464.8px;width:6.5px;height:5px;background:#e6e6e6;border-radius:1px;"></div>
<div style="left:242.6px;top:466.4px;width:4.2px;height:2.6px;background:#1b1c20;"></div>
<div style="left:255.7px;top:464.05px;width:6px;height:6.5px;background:#e9e2c4;border-radius:1px;"></div>
<div style="left:271.25px;top:464.05px;width:6.5px;height:6.5px;background:#0b2f55;border-radius:1px;"></div>
<div style="left:271.2px;top:464px;width:6.6px;height:6.6px;background:transparent;border:0.8px solid #2fa3f7;box-sizing:border-box;"></div>
<div style="left:286.0px;top:464.05px;width:7px;height:6.5px;background:#2b5fb5;border-radius:1px;"></div>
<div style="left:301.0px;top:464.05px;width:7px;height:6.5px;background:#1d7a46;border-radius:1px;"></div>
<div style="left:298.5px;top:473px;width:12px;height:1px;background:#8fb8e6;"></div>
<div style="left:316.25px;top:464.05px;width:6.5px;height:6.5px;background:#d8452a;border-radius:50%;"></div>
<div style="left:332.25px;top:464.05px;width:5.5px;height:6.5px;background:#dfe5ee;border-radius:50%;"></div>
<div style="left:346.95px;top:463.8px;width:4.5px;height:7px;background:#efefef;border-radius:1px;"></div>
<div style="left:360.75px;top:464.05px;width:6.5px;height:6.5px;background:#c1271d;border-radius:1px;"></div>
<div style="left:375.25px;top:464.55px;width:7.5px;height:5.5px;background:#2c6fc0;border-radius:1px;"></div>
<div style="left:391.25px;top:464.05px;width:6.5px;height:6.5px;background:#5e8f2f;border-radius:50%;"></div>
<div style="left:406.5px;top:464.05px;width:6px;height:6.5px;background:#8bbf3e;border-radius:50%;"></div>
<div style="left:421.75px;top:464.05px;width:6.5px;height:6.5px;background:#e8c53a;border-radius:50%;"></div>
<div style="left:419px;top:473px;width:12px;height:1px;background:#8fb8e6;"></div>
<div style="left:423.3px;top:465.6px;width:3.4px;height:3.4px;background:#3c7de0;border-radius:50%;"></div>
<div style="left:421.8px;top:464px;width:6.4px;height:2.6px;background:#d94235;border-radius:3px 3px 0 0;"></div>
<div style="left:437.05px;top:464.05px;width:6.5px;height:6.5px;background:#2c7fc2;border-radius:1px;"></div>
<div style="left:452.25px;top:464.05px;width:5.5px;height:6.5px;background:#d8eef5;border-radius:1px;"></div>
<div style="left:466.75px;top:464.05px;width:6.5px;height:6.5px;background:#e9e1d6;border-radius:50%;"></div>
<div style="left:468.4px;top:465.7px;width:3.2px;height:3.2px;background:#e0742a;border-radius:50%;"></div>
<div style="left:481.75px;top:464.05px;width:6.5px;height:6.5px;background:#b042a8;border-radius:1px;"></div>
<div style="left:496.3px;top:465.3px;width:7px;height:4px;background:#8a939d;border-radius:1px;"></div>
<div style="left:511.75px;top:466.0px;width:6.5px;height:2.6px;background:#e8e8f0;border-radius:1px;"></div>
<div style="left:527.0px;top:464.05px;width:6px;height:6.5px;background:#2b8ae8;border-radius:1px;"></div>
<div style="left:524px;top:473px;width:12px;height:1px;background:#8fb8e6;"></div>
<div style="left:542.25px;top:464.05px;width:5.5px;height:6.5px;background:#e8c53a;border-radius:1px;"></div>
<div style="left:556.75px;top:464.3px;width:6.5px;height:6px;background:#d94a4a;border-radius:1px;"></div>
<div style="left:571.75px;top:464.05px;width:6.5px;height:6.5px;background:#5b5fc7;border-radius:50%;"></div>
<div style="left:569px;top:473px;width:12px;height:1px;background:#8fb8e6;"></div>
<div style="left:586.75px;top:464.3px;width:6.5px;height:6px;background:#76b82a;border-radius:1px;"></div>
<div style="left:601.75px;top:464.05px;width:6.5px;height:6.5px;background:#6aa63a;border-radius:50%;"></div>
<div style="left:616.75px;top:464.05px;width:6.5px;height:6.5px;background:#f2c230;border-radius:50%;"></div>
<div style="left:618.4px;top:465.7px;width:3.2px;height:3.2px;background:#2b63c8;border-radius:50%;"></div>
<div style="left:632.25px;top:464.05px;width:6.5px;height:6.5px;background:#e0201c;border-radius:1px;"></div>
<div style="left:629.5px;top:473px;width:12px;height:1px;background:#8fb8e6;"></div>
<svg style="left:836px;top:463px;" width="84" height="9" viewBox="0 0 84 9"><path d="M3 5.4 L5 3.4 L7 5.4" fill="none" stroke="#ddd" stroke-width="0.8"/><rect x="13.3" y="1.4" width="2.8" height="4.6" rx="1.3" fill="#e8e8e8"/><path d="M12.6 7.4 h4.2" stroke="#e8e8e8" stroke-width="0.8"/><path d="M22.6 7.4 l5 -4.6 v4.6z" fill="#9a9a9a"/><path d="M31.6 3.6 h1.4 l1.6 -1.4 v4.8 l-1.6 -1.4 h-1.4z" fill="#cfcfcf"/><path d="M36 2.6 v4" stroke="#aaa" stroke-width="0.6"/><rect x="74.5" y="1.6" width="6.6" height="5.6" rx="0.6" fill="#f0f0f0"/><path d="M75.6 3.4 h4.4 M75.6 5 h3" stroke="#1b1c20" stroke-width="0.6"/></svg>
<span id="t81" style="top:464.82px;font-size:4.3px;line-height:5.16px;color:#e0e0e0;font-weight:400;left:878.10px;transform:scaleX(0.9525);">ESP</span>
<span id="t82" style="top:464.82px;font-size:4.3px;line-height:5.16px;color:#e0e0e0;font-weight:400;left:892.30px;transform:scaleX(0.9846);">07:08</span>
<span id="t83" style="top:449.6px;font-size:9px;line-height:10.8px;color:#ffffff;font-weight:400;text-shadow:0 0 2px #000;left:73.75px;transform:scaleX(0.9469);">Ing. Juan Pablo Baires</span>
<div style="left:303.3px;top:408.1px;width:465.6px;height:38.6px;border-radius:3px;overflow:hidden;box-shadow:0 2px 8px rgba(0,0,0,0.5);"><div style="left:0;top:0;width:219.2px;height:38.6px;background:rgba(55,55,55,0.935);"></div><div style="left:219.2px;top:0;width:207px;height:38.6px;background:rgba(44,44,44,0.935);"></div><div style="left:296.6px;top:0;width:0.8px;height:38.6px;background:rgba(70,70,70,0.5);"></div><div style="left:62.6px;top:0;width:0.8px;height:38.6px;background:#1c1c1c;"></div><div style="left:426.4px;top:0;width:39.2px;height:38.6px;background:#a1304a;"></div><div style="left:316px;top:23px;width:18px;height:18px;border-radius:50%;background:rgba(150,150,150,0.10);"></div><div style="left:356px;top:23px;width:18px;height:18px;border-radius:50%;background:rgba(120,150,180,0.12);"></div><div style="left:396px;top:23px;width:18px;height:18px;border-radius:50%;background:rgba(170,170,170,0.10);"></div><div style="left:309.7px;top:7.6px;width:104.5px;height:23.3px;box-sizing:border-box;border:0.9px solid #8c8c8c;border-radius:2px;"></div></div>
<span id="t84" style="top:421.84px;font-size:9.6px;line-height:11.52px;color:#a9a9a9;font-weight:700;left:316.40px;transform:scaleX(0.9452);">01:19:05</span>
<svg style="left:376px;top:418px;" width="20" height="19" viewBox="0 0 20 19"><rect x="2.2" y="4.6" width="10.6" height="9.6" rx="1.6" fill="#7e7e7e"/><path d="M13.4 8.4 l4.4 -2.6 v7.4 l-4.4 -2.6z" fill="#7e7e7e"/><path d="M1.8 16.8 L17.4 2" stroke="#3a3a3a" stroke-width="2.6"/><path d="M1.8 16.8 L17.4 2" stroke="#7e7e7e" stroke-width="0.9"/></svg>
<svg style="left:415.5px;top:417px;" width="19" height="21" viewBox="0 0 19 21"><rect x="6.6" y="2" width="5.8" height="10.6" rx="2.9" fill="none" stroke="#d2d2d2" stroke-width="1.1"/><path d="M4 9.6 a5.5 5.5 0 0 0 11 0 M9.5 15.2 v3.2" fill="none" stroke="#d2d2d2" stroke-width="1.1"/><path d="M2.4 18.6 L16.6 1.4" stroke="#3a3a3a" stroke-width="2.6"/><path d="M2.4 18.6 L16.6 1.4" stroke="#d2d2d2" stroke-width="1"/></svg>
<svg style="left:454.5px;top:419.5px;" width="19" height="16" viewBox="0 0 19 16"><path d="M5 13 H3 a1.4 1.4 0 0 1 -1.4 -1.4 V3 a1.4 1.4 0 0 1 1.4 -1.4 H16 a1.4 1.4 0 0 1 1.4 1.4 v8.600000000000001 a1.4 1.4 0 0 1 -1.4 1.4 H14" fill="none" stroke="#f0f0f0" stroke-width="1.2"/><path d="M9.5 14.6 V6 M6.6 8.6 L9.5 5.6 L12.4 8.6" fill="none" stroke="#f0f0f0" stroke-width="1.3"/></svg>
<svg style="left:494px;top:424.5px;" width="17" height="6" viewBox="0 0 17 6"><circle cx="2.6" cy="3" r="1.75" fill="#f0f0f0"/><circle cx="8.7" cy="3" r="1.75" fill="#f0f0f0"/><circle cx="14.8" cy="3" r="1.75" fill="#f0f0f0"/></svg>
<svg style="left:535.3px;top:420.5px;" width="14" height="14" viewBox="0 0 14 14"><path d="M1.6 1.4 h10.8 v8.6 h-1.6 v2.8 l-3 -2.8 h-6.2z" fill="none" stroke="#d2d2d2" stroke-width="1.1"/><path d="M4 4.4 h6 M4 6.8 h4.4" stroke="#d2d2d2" stroke-width="0.9"/></svg>
<svg style="left:573px;top:420px;" width="15" height="15" viewBox="0 0 15 15"><circle cx="3.6" cy="3.8" r="1.7" fill="none" stroke="#d2d2d2" stroke-width="1"/><circle cx="9.4" cy="2.8" r="2.1" fill="none" stroke="#d2d2d2" stroke-width="1"/><path d="M6.2 6.8 h6.4 a0.8 0.8 0 0 1 0.8 0.8 v3.4 a3.2 3.2 0 0 1 -6.4 1 M4.8 7.2 h-3 a0.6 0.6 0 0 0 -0.6 0.6 v2.4 a2.6 2.6 0 0 0 4.2 2" fill="none" stroke="#d2d2d2" stroke-width="1"/></svg>
<span id="t85" style="top:422.18px;font-size:10.2px;line-height:12.24px;color:#ffffff;font-weight:700;left:628.00px;transform:scaleX(0.9670);">Solicitar control</span>
<svg style="left:740px;top:422.3px;" width="19" height="10" viewBox="0 0 19 10"><path d="M1.4 6.6 c0 -1.6 1 -2.6 2.6 -3.2 c3.6 -1.3 7.4 -1.3 11 0 c1.6 0.6 2.6 1.6 2.6 3.2 v0.8 c0 0.6 -0.5 0.9 -1 0.8 l-2.8 -0.6 c-0.5 -0.1 -0.8 -0.5 -0.8 -1 v-1.2 c-2.3 -0.7 -4.7 -0.7 -7 0 v1.2 c0 0.5 -0.3 0.9 -0.8 1 l-2.8 0.6 c-0.5 0.1 -1 -0.2 -1 -0.8z" fill="#ffffff"/></svg>
<div style="left:50px;top:474px;width:973px;height:71px;background:#1e1e1e;"></div>
<div style="left:484.5px;top:474px;width:135px;height:70.5px;background:#3b3b3b;"></div>
<div style="left:619.5px;top:474px;width:134.5px;height:70.5px;background:#3d3d3d;"></div>
<div style="left:754px;top:474px;width:135px;height:70.5px;background:#3b3b3b;"></div>
<div style="left:889px;top:474px;width:134px;height:70.5px;background:radial-gradient(ellipse 78px 52px at 50% 48%,#5a5b82 0,#4c4d6c 50%,#3f3f57 100%);"></div>
<div style="left:122.5px;top:493px;width:33px;height:33px;background:#6264a7;border-radius:50%;"></div>
<span id="t86" style="top:503.4px;font-size:10.5px;line-height:12.6px;color:#ffffff;font-weight:700;left:130.50px;transform:scaleX(0.9544);">+10</span>
<div style="left:185.3px;top:493.2px;width:32px;height:32px;border-radius:50%;overflow:hidden;background:#d5d7db;"><svg style="left:0;top:0;filter:blur(0.45px);" width="32" height="32" viewBox="0 0 32 32"><rect width="32" height="32" fill="#d5d7db"/><path d="M0 19 L32 9 v2.6 L0 21.6z" fill="#4a74c4"/><path d="M7 9 Q12 0 23 4 L26 10 L24 13 L13 9 L9 15z" fill="#1b2136"/><ellipse cx="17.5" cy="14.5" rx="6.3" ry="7.6" fill="#cbb6aa" transform="rotate(14 17.5 14.5)"/><path d="M3 27 Q11 20 17 24 L27 22 L29 32 L5 32z" fill="#7ba5d2"/><path d="M13 24 l4 3 l3 -4" fill="none" stroke="#dfe9f3" stroke-width="1.2"/></svg></div>
<div style="left:248.4px;top:493.2px;width:32px;height:32px;border-radius:50%;overflow:hidden;background:#0a0909;"><svg style="left:0;top:0;filter:blur(0.45px);" width="32" height="32" viewBox="0 0 32 32"><rect width="32" height="32" fill="#0a0909"/><ellipse cx="14.5" cy="15.5" rx="5" ry="6.6" fill="#a87b67"/><path d="M8 16 Q8 5 16 5 Q23 6 22 16 Q19 9 14 9 Q10 10 9.5 18z" fill="#060505"/><path d="M5 30 Q12 22 19 27 L30 21 L30 32 L5 32z" fill="#7f7f7f"/><path d="M9 27 q4 -3 8 1" stroke="#cfcfcf" stroke-width="1.4" fill="none"/></svg></div>
<div style="left:311.3px;top:493.2px;width:32px;height:32px;border-radius:50%;overflow:hidden;background:#a9a29a;"><svg style="left:0;top:0;filter:blur(0.45px);" width="32" height="32" viewBox="0 0 32 32"><rect width="32" height="17" fill="#d4ccc4"/><rect y="16" width="32" height="16" fill="#8b857f"/><circle cx="16" cy="4.6" r="2.4" fill="#6b4a3a"/><rect x="12" y="7" width="8.6" height="10.4" rx="2.2" fill="#bddcf6"/><path d="M11.6 16.4 h9.4 l-0.6 13 h-2.6 l-1.5 -9 l-2 9 h-2.6z" fill="#13131a"/><path d="M12 29.4 h3.4 v1.6 h-3.4z M17.6 29.4 h3.4 v1.6 h-3.4z" fill="#3d4a7a"/></svg></div>
<div style="left:374.2px;top:493px;width:32px;height:32px;border-radius:50%;overflow:hidden;background:#131317;"><svg style="left:0;top:0;filter:blur(0.45px);" width="32" height="32" viewBox="0 0 32 32"><rect width="32" height="32" fill="#131317"/><path d="M0 32 L0 9 L9 0 L17 0 L7 32z" fill="#8e8d87"/><ellipse cx="17.6" cy="12.4" rx="5.4" ry="7" fill="#8c5f4b"/><path d="M11.6 10 Q14 1 22 4 Q25 6 23.6 11 Q19 5 12.6 11z" fill="#0d0b0b"/><path d="M7 32 Q9 21 17 21.5 Q25 21 27 32z" fill="#1f2f6e"/><path d="M24 23 L32 19 L32 32 L27 32z" fill="#b3ab92"/></svg></div>
<div style="left:437.2px;top:493px;width:32px;height:32px;border-radius:50%;overflow:hidden;background:#e3e6eb;"><svg style="left:0;top:0;filter:blur(0.45px);" width="32" height="32" viewBox="0 0 32 32"><rect width="32" height="32" fill="#e3e6eb"/><rect x="19" y="3" width="9" height="20" fill="#f7f8fa"/><rect x="16" y="6" width="2.2" height="16" fill="#aab3c3"/><path d="M3 15 Q9 9.5 16 14 L19.6 26 L5 30z" fill="#2b4f9f"/><rect x="9" y="16.6" width="6.4" height="2" fill="#d4d53c"/><ellipse cx="10.6" cy="8.4" rx="3.6" ry="4.3" fill="#7c5b48"/><path d="M6.6 7.6 Q9 1.6 14.8 5.6 L14.2 7.6 Q10 4.4 7.2 9z" fill="#19130f"/><path d="M14 22 L25 24 L25 26.6 L12 27z" fill="#9a7560"/><rect y="27" width="32" height="5" fill="#c5c9d2"/></svg></div>
<div style="left:534.9px;top:492.5px;width:33.0px;height:33.0px;border-radius:50%;overflow:hidden;background:#4b8f8c;"><svg style="left:0;top:0;filter:blur(0.45px);" width="33.0" height="33.0" viewBox="0 0 32 32"><rect width="32" height="32" fill="#4b8f8c"/><rect x="21" width="11" height="32" fill="#5f9660"/><rect x="0" y="12" width="7" height="10" fill="#2b6f86"/><path d="M6.6 11.6 Q8 1.6 17 2 Q25.4 2 26 10.4 L27.6 12.6 L6.6 12.6z" fill="#2a3557"/><ellipse cx="16.6" cy="16.4" rx="6.8" ry="7.4" fill="#c19b89"/><path d="M10 13 h13 v1.6 h-13z" fill="#5a4a48" opacity="0.6"/><path d="M2.6 32 Q6 23.6 16 24 Q27 23.6 30 32z" fill="#c9c2aa"/></svg></div>
<div style="left:670.0px;top:492.5px;width:33.0px;height:33.0px;border-radius:50%;overflow:hidden;background:#b7cb22;"><svg style="left:0;top:0;filter:blur(0.45px);" width="33.0" height="33.0" viewBox="0 0 32 32"><rect width="32" height="32" fill="#b7cb22"/><path d="M0 0 h9 l-3 14 l3 18 h-9z M32 0 h-7 l2 12 l-3 20 h8z" fill="#7fa018" opacity="0.75"/><ellipse cx="16.6" cy="6.4" rx="3.5" ry="3" fill="#1d1510"/><ellipse cx="16.2" cy="9.2" rx="2.7" ry="3.5" fill="#6b4937"/><path d="M10.4 15.4 Q16 11.4 22.2 15.4 L23 33 L10 33z" fill="#cfcfd5"/></svg></div>
<div style="left:805.3px;top:493.1px;width:33.0px;height:33.0px;border-radius:50%;overflow:hidden;background:#776a38;"><svg style="left:0;top:0;filter:blur(0.45px);" width="33.0" height="33.0" viewBox="0 0 32 32"><rect width="32" height="32" fill="#776a38"/><rect x="23" width="9" height="32" fill="#8d9ba9"/><path d="M5.6 15 Q5 2 17 2 Q28 2 27 15 L25 10 Q17 6 8 10z" fill="#161313"/><ellipse cx="16.4" cy="16.6" rx="8.8" ry="11" fill="#aa7360"/><path d="M10.6 14 h4 M18.6 14 h4" stroke="#3a2620" stroke-width="1.1"/><path d="M3 33 L7 27 L16 30.6 L26 27 L30 33z" fill="#2a7bda"/></svg></div>
<div style="left:936.1px;top:488.9px;width:40.6px;height:40.6px;background:#8587ea;border-radius:50%;"></div>
<div style="left:939.3px;top:492.1px;width:34.2px;height:34.2px;border-radius:50%;overflow:hidden;background:#a7a8ad;"><svg style="left:0;top:0;filter:blur(0.45px);" width="34.2" height="34.2" viewBox="0 0 32 32"><defs><linearGradient id="g9" x1="0" y1="0" x2="1" y2="0"><stop offset="0" stop-color="#6f6f73"/><stop offset="0.55" stop-color="#a9aaae"/><stop offset="1" stop-color="#c9cacd"/></linearGradient></defs><rect width="32" height="32" fill="url(#g9)"/><path d="M9 11.6 Q9 3.4 16.6 3.4 Q23.6 3.6 23.4 11 L22.4 9.4 Q16 6 10.4 9.8z" fill="#1a1310"/><ellipse cx="15.6" cy="13.4" rx="6.4" ry="8" fill="#8a5946"/><path d="M10.6 12 h3.8 M16.4 12 h3.8" stroke="#2a1b15" stroke-width="0.8" opacity="0.7"/><path d="M3 34 Q4 25 13 24.4 L21.6 20.6 Q28 22.6 29.6 34z" fill="#46689e"/><path d="M13 24.4 l3.6 3 l4 -5" fill="none" stroke="#2f4a78" stroke-width="1"/></svg></div>
<span id="t87" style="top:532.14px;font-size:9.6px;line-height:11.52px;color:#ffffff;font-weight:400;-webkit-text-stroke:0.22px #fff;left:496.00px;transform:scaleX(0.9034);">Jose Adonay Hernan...</span>
<span id="t88" style="top:532.14px;font-size:9.6px;line-height:11.52px;color:#ffffff;font-weight:400;-webkit-text-stroke:0.22px #fff;left:630.80px;transform:scaleX(0.8769);">Josue Raul Calero Per...</span>
<span id="t89" style="top:532.14px;font-size:9.6px;line-height:11.52px;color:#ffffff;font-weight:400;-webkit-text-stroke:0.22px #fff;left:765.60px;transform:scaleX(0.8527);">Jose Luis Reyes Lainez</span>
<span id="t90" style="top:532.14px;font-size:9.6px;line-height:11.52px;color:#ffffff;font-weight:400;-webkit-text-stroke:0.22px #fff;left:900.50px;transform:scaleX(0.8814);">Ing. Juan Pablo Baires</span>
<svg style="left:591px;top:531px;" width="12" height="14" viewBox="0 0 12 14"><rect x="4.1" y="1.6" width="3.8" height="6.8" rx="1.9" fill="none" stroke="#e6e6e6" stroke-width="1"/><path d="M2.4 6.6 a3.6 3.6 0 0 0 7.2 0 M6 10.4 v2" fill="none" stroke="#e6e6e6" stroke-width="1"/><path d="M1.2 12.8 L10.6 1" stroke="#3b3b3b" stroke-width="2.2"/><path d="M1.2 12.8 L10.6 1" stroke="#e6e6e6" stroke-width="1"/></svg>
<svg style="left:726px;top:531px;" width="12" height="14" viewBox="0 0 12 14"><rect x="4.1" y="1.6" width="3.8" height="6.8" rx="1.9" fill="none" stroke="#e6e6e6" stroke-width="1"/><path d="M2.4 6.6 a3.6 3.6 0 0 0 7.2 0 M6 10.4 v2" fill="none" stroke="#e6e6e6" stroke-width="1"/><path d="M1.2 12.8 L10.6 1" stroke="#3b3b3b" stroke-width="2.2"/><path d="M1.2 12.8 L10.6 1" stroke="#e6e6e6" stroke-width="1"/></svg>
<svg style="left:856.7px;top:531px;" width="12" height="14" viewBox="0 0 12 14"><rect x="4.1" y="1.6" width="3.8" height="6.8" rx="1.9" fill="none" stroke="#e6e6e6" stroke-width="1"/><path d="M2.4 6.6 a3.6 3.6 0 0 0 7.2 0 M6 10.4 v2" fill="none" stroke="#e6e6e6" stroke-width="1"/><path d="M1.2 12.8 L10.6 1" stroke="#3b3b3b" stroke-width="2.2"/><path d="M1.2 12.8 L10.6 1" stroke="#e6e6e6" stroke-width="1"/></svg>
<div style="left:0px;top:544.4px;width:1023px;height:30.6px;background:#0a0e14;"></div>
<div style="left:257px;top:544.6px;width:36px;height:30.4px;background:#3a3d41;"></div>
<div style="left:223.5px;top:573px;width:29.5px;height:2px;background:#7fb2e8;"></div>
<div style="left:258.5px;top:573px;width:33px;height:2px;background:#9ccaf5;"></div>
<svg style="left:11px;top:553px;" width="14" height="14" viewBox="0 0 14 14"><path d="M0.5 2.3 L6 1.5 V6.6 H0.5z M6.8 1.4 L13.5 0.4 V6.6 H6.8z M0.5 7.4 H6 V12.5 L0.5 11.7z M6.8 7.4 H13.5 V13.6 L6.8 12.6z" fill="#ffffff"/></svg>
<svg style="left:46px;top:552px;" width="16" height="16" viewBox="0 0 16 16"><circle cx="9.8" cy="6" r="3.9" fill="none" stroke="#f4f4f4" stroke-width="1.05"/><path d="M7 8.9 L2.4 13.6" stroke="#f4f4f4" stroke-width="1.2"/></svg>
<svg style="left:82px;top:553px;" width="15" height="14" viewBox="0 0 15 14"><rect x="2.4" y="3.6" width="6.8" height="6.8" fill="none" stroke="#f4f4f4" stroke-width="1"/><path d="M2.4 1.2 h6.8 M2.4 12.8 h6.8 M12.2 1 v1.6 M12.2 4.4 v8.6" stroke="#f4f4f4" stroke-width="1"/><path d="M9.6 5.4 h2.2" stroke="#f4f4f4" stroke-width="0.9"/></svg>
<svg style="left:119.5px;top:551.5px;" width="17" height="16" viewBox="0 0 17 16"><path d="M1 2.2 h5.6 l1.4 1.6 h8 v10.6 h-15z" fill="#f6c445"/><path d="M1 6 h15 v8.4 h-15z" fill="#fbdf7e"/><path d="M5 10 h7 v4.4 h-7z" fill="#3b9be8"/><path d="M6.6 12 h3.8 v2.4 h-3.8z" fill="#f1f6fb"/></svg>
<svg style="left:155.5px;top:550.5px;" width="18" height="19" viewBox="0 0 18 19"><defs><radialGradient id="ffg" cx="0.6" cy="0.25" r="0.9"><stop offset="0" stop-color="#ffd84a"/><stop offset="0.45" stop-color="#ff9a1f"/><stop offset="1" stop-color="#f0383f"/></radialGradient></defs><path d="M9.6 0.8 c0.6 1.6 2 2.4 3.6 3.4 c2.6 1.6 3.8 4 3.6 6.6 a7.9 7.9 0 1 1 -15.4 -2.4 c0.4 -1.6 1.2 -2.8 2.2 -3.8 c0 1 0.4 1.6 1 2 c0.6 -2.4 2.4 -4.2 5 -5.800000000000001z" fill="url(#ffg)"/><circle cx="8.6" cy="10.2" r="4.1" fill="#6f3fd6"/><path d="M5.2 8.2 q3.4 -2.4 6.6 0.4 q-3 -0.6 -4.200000000000001 1.6z" fill="#a56bff"/></svg>
<svg style="left:192.5px;top:552px;" width="17" height="16" viewBox="0 0 17 16"><rect x="5.6" y="1.6" width="10.6" height="12.8" rx="1" fill="#1f7fd6"/><rect x="5.6" y="1.6" width="10.6" height="4.4" fill="#35a2ee"/><rect x="9" y="8.4" width="7.2" height="6" fill="#0f5fae"/><rect x="0.8" y="4" width="9" height="9" rx="1" fill="#0a64c0"/><circle cx="5.3" cy="8.5" r="2.3" fill="none" stroke="#fff" stroke-width="1.3"/></svg>
<div style="left:229.5px;top:552px;width:17px;height:17px;border-radius:50%;background:conic-gradient(from -60deg,#e33b2e 0 120deg,#f7c51e 120deg 240deg,#2da94f 240deg 360deg);"></div>
<div style="left:233.8px;top:556.3px;width:8.4px;height:8.4px;background:#ffffff;border-radius:50%;"></div>
<div style="left:235px;top:557.5px;width:6px;height:6px;background:#3f7fe8;border-radius:50%;"></div>
<svg style="left:265px;top:550.7px;" width="20" height="18" viewBox="0 0 20 18"><circle cx="14.6" cy="3.6" r="2.2" fill="#7b83eb"/><circle cx="9.4" cy="3" r="2.8" fill="#7b83eb"/><path d="M6 7 h11 a1 1 0 0 1 1 1 v4.4 a3.6 3.6 0 0 1 -3.6 3.6 h-8.4z" fill="#5059c9"/><rect x="1" y="5" width="9.6" height="9.6" rx="1" fill="#4b53bc"/><path d="M3.4 7.4 h4.8 M5.8 7.4 v5" stroke="#fff" stroke-width="1.2"/><circle cx="15.6" cy="13.6" r="3.4" fill="#d6293e" stroke="#3a3d41" stroke-width="0.8"/></svg>
<svg style="left:856px;top:552px;" width="50" height="16" viewBox="0 0 50 16"><path d="M3.6 9.6 L7.6 5.6 L11.6 9.6" fill="none" stroke="#fff" stroke-width="1.1"/><rect x="22" y="2.6" width="9.4" height="7" fill="none" stroke="#fff" stroke-width="1"/><path d="M20.4 5 v7.6 h6.6 M24 12.6 v-1.4 h5 v1.4 M26.6 9.6 v1.6" fill="none" stroke="#fff" stroke-width="0.9"/><path d="M37.2 6.4 h2 l2.6 -2.4 v8.4 l-2.6 -2.4 h-2z" fill="none" stroke="#fff" stroke-width="0.9"/><path d="M43.6 5.8 q1.4 2.4 0 4.8 M45.4 4.6 q2.2 3.6 0 7.200000000000001 M47.2 3.6 q2.8 4.6 0 9.2" fill="none" stroke="#fff" stroke-width="0.8"/></svg>
<span id="t91" style="top:554.88px;font-size:8.2px;line-height:9.84px;color:#fff;font-weight:400;left:914.75px;transform:scaleX(0.8236);">ESP</span>
<span id="t92" style="top:547.6px;font-size:9px;line-height:10.8px;color:#fff;font-weight:400;left:949.40px;transform:scaleX(0.8788);">19:08</span>
<span id="t93" style="top:560.9px;font-size:9px;line-height:10.8px;color:#fff;font-weight:400;left:942.15px;transform:scaleX(0.9787);">4/5/2020</span>
<svg style="left:990.5px;top:553px;" width="15" height="14" viewBox="0 0 15 14"><path d="M1.6 1.6 h11.8 v8.4 h-3.4 v2.6 l-2.8 -2.6 h-5.6z" fill="none" stroke="#fff" stroke-width="1.1"/></svg>
<div style="left:1018.6px;top:544.5px;width:0.7px;height:30.5px;background:#5a6068;"></div>
</div></body></html>
